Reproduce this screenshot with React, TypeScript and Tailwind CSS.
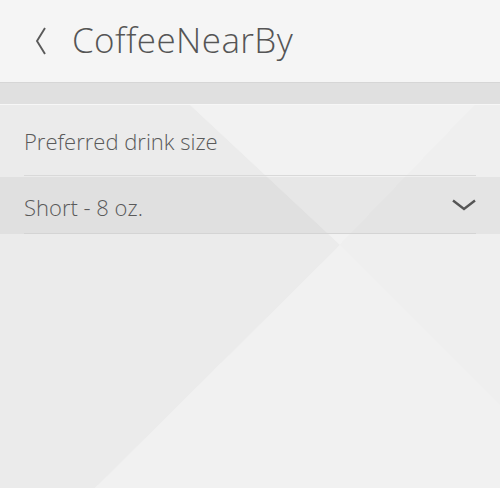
export default function App() {
  return (
    <div className="relative h-[488px] w-[500px] overflow-hidden bg-[#f0f0f0] font-['Open_Sans',sans-serif] text-[#5a5a5a]">
      <svg className="absolute inset-0" width="500" height="488" viewBox="0 0 500 488">
        <polygon points="0,105 190,105 340,245 95,488 0,488" fill="#ebebeb" />
        <polygon points="190,105 475,105 340,245" fill="#f2f2f2" />
        <polygon points="340,245 95,488 500,488 500,405" fill="#f1f1f1" />
        <polygon points="475,105 500,105 500,405 340,245" fill="#efefef" />
      </svg>

      <div className="relative">
        <header className="flex h-[82px] items-center bg-[#f5f5f5]">
          <svg className="ml-[34px]" width="14" height="28" viewBox="0 0 14 28">
            <polyline points="11,1 3,14 11,27" fill="none" stroke="#5a5a5a" strokeWidth="1.9" />
          </svg>
          <h1 className="ml-[24px] pb-[3px] text-[35px] font-light leading-none tracking-[0.4px] text-[#555]">
            CoffeeNearBy
          </h1>
        </header>
        <div className="h-[23px] border-t border-[#d6d6d6] border-b border-b-[#f7f7f7] bg-[#e0e0e0]" />

        <div className="px-[24px]">
          <div className="flex h-[71px] items-center border-b border-[#d9d9d9] pt-[3px] text-[22px] font-light">
            Preferred drink size
          </div>
        </div>
        <div className="mt-[1px] bg-black/[0.045]">
          <div className="mx-[24px] flex h-[57px] items-center justify-between border-b border-[#d4d4d4] text-[22px] font-light">
            <span className="pt-[4px]">Short - 8 oz.</span>
            <svg width="24" height="12" viewBox="0 0 24 12">
              <polyline points="1,1.5 12,10 23,1.5" fill="none" stroke="#555" strokeWidth="2.4" />
            </svg>
          </div>
        </div>
      </div>
    </div>
  )
}
